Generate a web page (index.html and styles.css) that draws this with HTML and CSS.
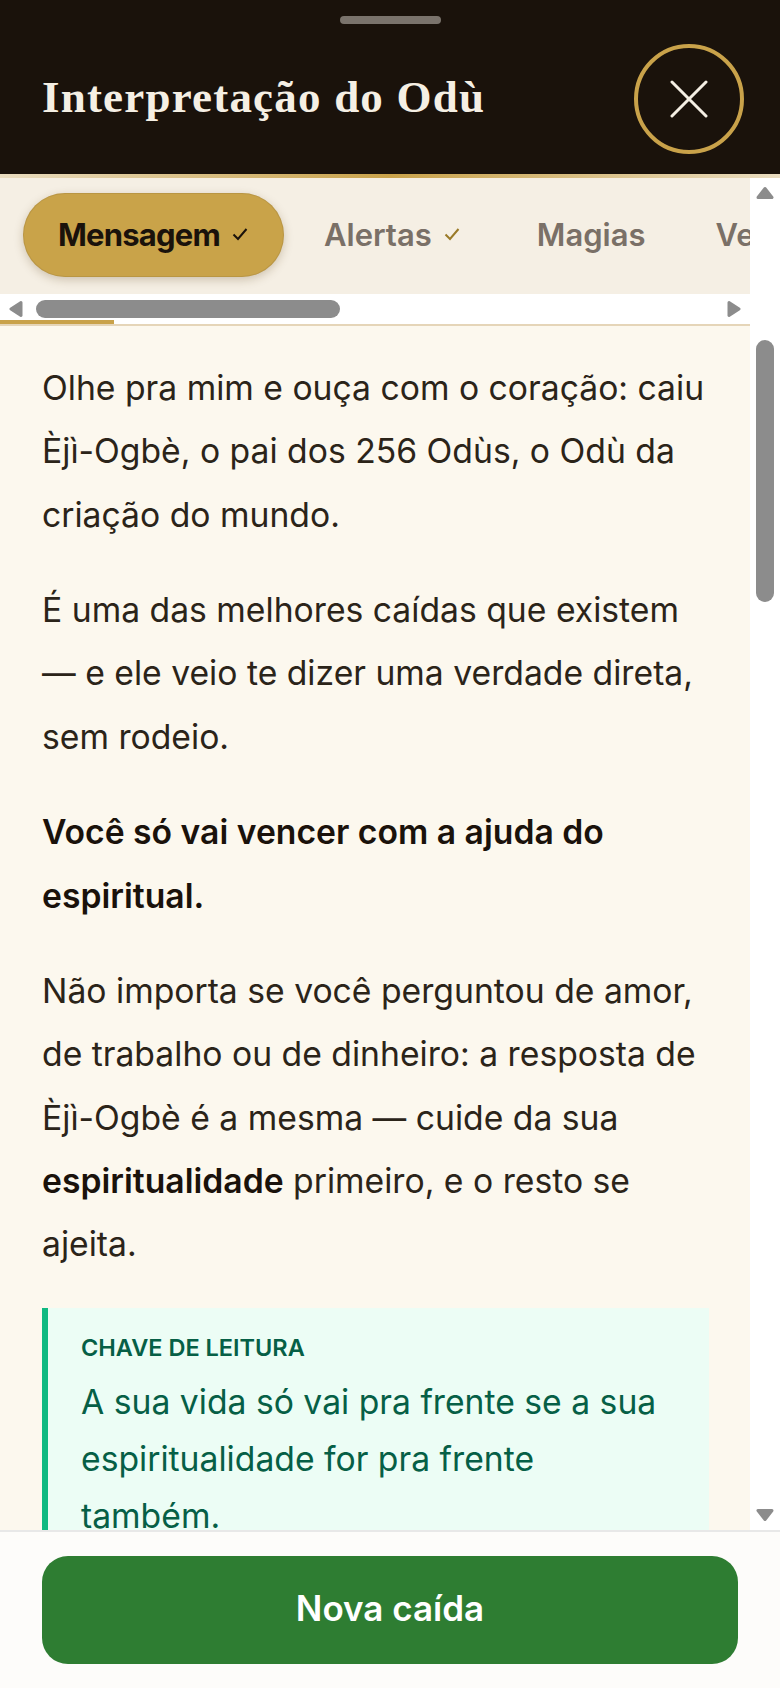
FILE: index.html
```html
<!DOCTYPE html>
<html lang="pt-BR">
<head>
<meta charset="utf-8">
<title>Interpretação do Odù</title>
<link rel="stylesheet" href="styles.css">
</head>
<body>
<div class="sheet">
  <header class="header">
    <div class="handle"></div>
    <div class="header-row">
      <h1 class="title">Interpretação do Odù</h1>
      <button class="close" aria-label="Fechar">
        <svg class="close-icon" viewBox="0 0 38 38"><path d="M2 2 36 36M36 2 2 36"/></svg>
      </button>
    </div>
  </header>
  <div class="gold-line"></div>
  <div class="middle">
    <div class="pane">
      <nav class="tabs">
        <div class="tab tab-active">Mensagem<svg class="check" viewBox="0 0 16 14"><path d="M1.5 7.5 6 12 14.5 2"/></svg></div>
        <div class="tab">Alertas<svg class="check check-gold" viewBox="0 0 16 14"><path d="M1.5 7.5 6 12 14.5 2"/></svg></div>
        <div class="tab">Magias</div>
        <div class="tab">Ve</div>
      </nav>
      <div class="hbar">
        <svg class="arrow" viewBox="0 0 14 18"><path d="M12 2.500 2 9l10 6.500z"/></svg>
        <span class="hthumb"></span>
        <svg class="arrow arrow-end" viewBox="0 0 14 18"><path d="M2 2.500 12 9 2 15.500z"/></svg>
      </div>
      <div class="progress"><div class="progress-fill"></div></div>
      <main class="content">
        <p class="para">Olhe pra mim e ouça com o coração: caiu Èjì-Ogbè, o pai dos 256 Odùs, o Odù da criação do mundo.</p>
        <p class="para">É uma das melhores caídas que existem — e ele veio te dizer uma verdade direta, sem rodeio.</p>
        <p class="para"><strong>Você só vai vencer com a ajuda do espiritual.</strong></p>
        <p class="para">Não importa se você perguntou de amor, de trabalho ou de dinheiro: a resposta de Èjì-Ogbè é a mesma — cuide da sua <strong>espiritualidade</strong> primeiro, e o resto se ajeita.</p>
        <aside class="callout">
          <div class="callout-label">CHAVE DE LEITURA</div>
          <div class="callout-text">A sua vida só vai pra frente se a sua espiritualidade for pra frente também.</div>
        </aside>
      </main>
    </div>
    <div class="vbar">
      <svg class="varrow" viewBox="0 0 18 14"><path d="M9 2.500 16 11.500H2z"/></svg>
      <span class="vthumb"></span>
      <svg class="varrow varrow-end" viewBox="0 0 18 14"><path d="M2 2.500H16L9 11.500z"/></svg>
    </div>
  </div>
  <footer class="footer">
    <button class="cta">Nova caída</button>
  </footer>
</div>
</body>
</html>
```
FILE: styles.css
```css
* { box-sizing: border-box; }
html, body { margin: 0; padding: 0; height: 100%; overflow: hidden; }
body { font-family: "Inter", "Noto Sans", sans-serif; color: #2b2419; background: #fff; }
.sheet { display: flex; flex-direction: column; height: 1688px; }
.header { height: 174px; background: #1a120b; padding: 16px 36px 0 42px; display: flex; flex-direction: column; flex: none; }
.handle { width: 101px; height: 8px; border-radius: 4px; background: #7a736c; align-self: center; margin-right: 6px; }
.header-row { display: flex; align-items: center; justify-content: space-between; margin-top: 20px; }
.title { margin: 0 0 4px; font-family: "Liberation Serif", serif; font-weight: 700; font-size: 45px; color: #f5efe4; letter-spacing: 1.2px; }
.close { width: 110px; height: 110px; border-radius: 50%; border: 4px solid #c9a24a; background: transparent; padding: 0; display: flex; align-items: center; justify-content: center; }
.close-icon { width: 38px; height: 38px; fill: none; stroke: #f5efe4; stroke-width: 3; stroke-linecap: round; }
.gold-line { height: 4px; flex: none; background: linear-gradient(90deg, #e9dcc0 0%, #c9a24a 50%, #e9dcc0 100%); }
.middle { flex: 1; display: flex; min-height: 0; background: #fff; }
.pane { width: 750px; display: flex; flex-direction: column; min-height: 0; }
.tabs { height: 116px; background: #f5efe4; display: flex; align-items: center; padding: 0 0 2px 23px; overflow: hidden; flex: none; white-space: nowrap; }
.tab { flex: none; font-size: 31px; font-weight: 600; color: #7a7067; display: flex; align-items: center; gap: 12px; padding: 0 37px 2px; margin-left: 3px; }
.tab:last-child { margin-left: -4px; }
.tab-active { width: 261px; height: 84px; border-radius: 42px; background: #c9a349; color: #1a120b; padding: 0 0 2px 35px; margin-left: 0; font-weight: 700; letter-spacing: -0.8px; box-shadow: 0 3px 10px rgba(90, 65, 20, .25), inset 0 0 0 1px rgba(140, 110, 50, .25); }
.check { width: 16px; height: 14px; fill: none; stroke: #1a120b; stroke-width: 2; flex: none; }
.check-gold { stroke: #9a7a28; }
.hbar { height: 26px; background: #fff; display: flex; align-items: flex-start; padding: 6px 9px 0; flex: none; }
.hthumb { width: 304px; height: 18px; border-radius: 9px; background: #8c8c8c; margin-left: 13px; }
.arrow { width: 14px; height: 18px; fill: #8c8c8c; stroke: #8c8c8c; stroke-width: 3; stroke-linejoin: round; flex: none; }
.arrow-end { margin-left: auto; }
.progress { height: 6px; border-bottom: 2px solid #e5d5b8; flex: none; background: #fff; }
.progress-fill { width: 114px; height: 4px; background: #c9a24a; }
.content { flex: 1; min-height: 0; overflow: hidden; background: #fcf8ee; padding: 30px 41px 0 42px; font-size: 33.7px; line-height: 63.36px; }
.para { margin: 0 0 32px; }
.para strong { color: #1a120b; font-weight: 600; }
.callout { background: #ecfdf5; border-left: 6px solid #10b981; padding: 22px 33px 0; color: #065f46; }
.callout-label { font-size: 23.5px; font-weight: 600; line-height: 36px; margin-bottom: 7px; }
.callout-text { font-size: 33.7px; line-height: 57px; }
.vbar { width: 30px; flex: none; background: #fff; display: flex; flex-direction: column; align-items: center; padding: 8px 0; }
.varrow { width: 18px; height: 14px; fill: #8c8c8c; stroke: #8c8c8c; stroke-width: 3; stroke-linejoin: round; flex: none; }
.varrow-end { margin-top: auto; }
.vthumb { width: 18px; height: 262px; border-radius: 9px; background: #8c8c8c; margin-top: 140px; }
.footer { height: 158px; flex: none; background: #fdfcfa; border-top: 2px solid #e8e8e8; padding: 24px 42px 0; }
.cta { width: 100%; height: 108px; border: 0; border-radius: 26px; background: #2e7d32; color: #fff; font-family: "Inter", sans-serif; font-size: 35px; font-weight: 600; padding: 0 0 5px; }
```
